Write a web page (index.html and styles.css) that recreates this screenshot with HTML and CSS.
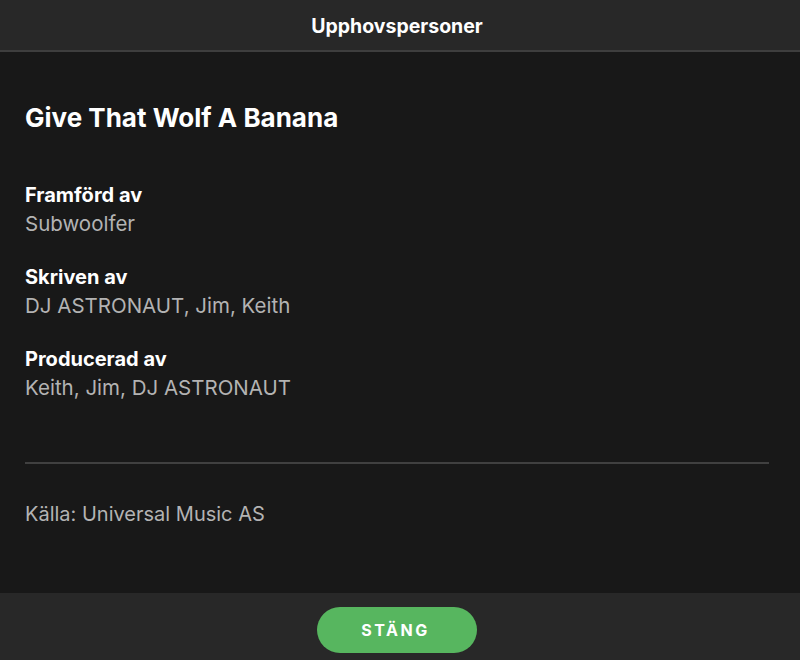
FILE: index.html
```html
<!DOCTYPE html>
<html lang="sv">
<head>
<meta charset="utf-8">
<link rel="stylesheet" href="styles.css">
</head>
<body>
<div class="dialog">
  <header class="head">Upphovspersoner</header>
  <main class="content">
    <h1 class="title">Give That Wolf A Banana</h1>
    <section class="credit">
      <h2 class="label">Framförd av</h2>
      <p class="value">Subwoolfer</p>
    </section>
    <section class="credit">
      <h2 class="label">Skriven av</h2>
      <p class="value">DJ ASTRONAUT, Jim, Keith</p>
    </section>
    <section class="credit">
      <h2 class="label">Producerad av</h2>
      <p class="value">Keith, Jim, DJ ASTRONAUT</p>
    </section>
    <hr class="sep">
    <p class="source">Källa: Universal Music AS</p>
  </main>
  <footer class="foot">
    <button class="close">STÄNG</button>
  </footer>
</div>
</body>
</html>
```
FILE: styles.css
```css
* { box-sizing: border-box; }
html, body { margin: 0; padding: 0; }
body {
  width: 800px;
  height: 660px;
  background: #181818;
  font-family: Inter, "Noto Sans", sans-serif;
  color: #fff;
}
.dialog {
  display: flex;
  flex-direction: column;
  height: 660px;
}
.head {
  height: 52px;
  flex: none;
  background: #282828;
  border-bottom: 2px solid #3e3e3e;
  display: flex;
  align-items: center;
  justify-content: center;
  font-size: 19.5px;
  font-weight: 700;
  padding: 1px 6px 0 0;
}
.content {
  flex: 1;
  background: #181818;
  padding: 0 31px 0 25px;
}
.title {
  margin: 49px 0 0;
  font-size: 26px;
  font-weight: 700;
  line-height: 34px;
}
.credit { margin-top: 46px; }
.credit + .credit { margin-top: 25px; }
.label {
  margin: 0;
  font-size: 20px;
  font-weight: 700;
  line-height: 28px;
}
.value {
  margin: 1px 0 0;
  font-size: 20.5px;
  color: #b3b3b3;
  line-height: 28px;
}
.sep {
  margin: 60px 0 0;
  border: 0;
  border-top: 2px solid #404040;
}
.source {
  margin: 36px 0 0;
  font-size: 20px;
  color: #b3b3b3;
  line-height: 28px;
}
.foot {
  height: 67px;
  flex: none;
  background: #282828;
  display: flex;
  justify-content: center;
  align-items: flex-start;
  padding-top: 14px;
}
.close {
  width: 160px;
  height: 46px;
  border: 0;
  border-radius: 23px;
  background: #57b65f;
  color: #fff;
  font-family: inherit;
  font-size: 16px;
  font-weight: 700;
  letter-spacing: 2.5px;
  margin-left: -6px;
  padding-left: 3px;
}
```
